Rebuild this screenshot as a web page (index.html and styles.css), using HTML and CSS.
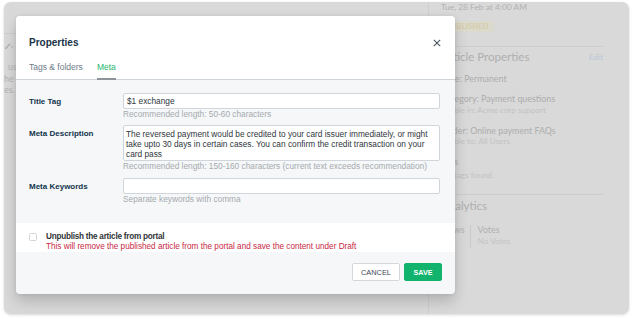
FILE: index.html
```html
<!DOCTYPE html>
<html lang="en">
<head>
<meta charset="utf-8">
<title>Properties</title>
<link rel="stylesheet" href="styles.css">
</head>
<body>
<div class="window">
  <div class="app-main">
    <div class="app-header"></div>
    <div class="app-content">
      <div class="edit-tool">
        <svg width="9" height="6" viewBox="0 0 9 6"><path d="M0.6 5.4 L4.6 1.2" stroke="#b0b0b0" stroke-width="1.4" fill="none" stroke-linecap="round"/><path d="M6 3.6 L8.4 3.6 L7.2 5 Z" fill="#b0b0b0"/></svg>
      </div>
      <p class="bg-text"><span class="line ind">us</span><span class="line">he</span><span class="line">es.</span></p>
    </div>
  </div>
  <aside class="side">
    <div class="side-date">Tue, 28 Feb at 4:00 AM</div>
    <div class="badge">PUBLISHED</div>
    <div class="rule"></div>
    <div class="side-head"><h3>Article Properties</h3><span class="edit">Edit</span></div>
    <div class="prop p-type">Type: Permanent</div>
    <div class="prop p-gap">Category: Payment questions</div>
    <div class="sub">Visible in: Acme corp support</div>
    <div class="prop p-gap">Folder: Online payment FAQs</div>
    <div class="sub">Visible to: All Users</div>
    <div class="prop p-gap">Tags</div>
    <div class="sub sub-tags">No tags found.</div>
    <div class="rule rule-2"></div>
    <h3 class="analytics">Analytics</h3>
    <div class="stats">
      <div class="stat"><div class="stat-label">Views</div></div>
      <div class="stat"><div class="stat-label">Votes</div><div class="stat-value">No Votes</div></div>
    </div>
  </aside>

  <div class="modal" role="dialog" aria-label="Properties">
    <header class="modal-head">
      <div class="title-row">
        <h2>Properties</h2>
        <button class="close" aria-label="Close"><svg width="8" height="8" viewBox="0 0 8 8"><path d="M0.8 0.8 L7.2 7.2 M7.2 0.8 L0.8 7.2" stroke="#4a5863" stroke-width="1.1" fill="none"/></svg></button>
      </div>
      <nav class="tabs">
        <span class="tab">Tags &amp; folders</span>
        <span class="tab active">Meta</span>
      </nav>
    </header>
    <section class="modal-body">
      <div class="field">
        <label class="label">Title Tag</label>
        <div class="control">
          <input class="input" type="text" value="$1 exchange">
          <p class="hint">Recommended length: 50-60 characters</p>
        </div>
      </div>
      <div class="field">
        <label class="label">Meta Description</label>
        <div class="control">
          <textarea class="input textarea">The reversed payment would be credited to your card issuer immediately, or might take upto 30 days in certain cases. You can confirm the credit transaction on your card pass</textarea>
          <p class="hint">Recommended length: 150-160 characters (current text exceeds recommendation)</p>
        </div>
      </div>
      <div class="field">
        <label class="label">Meta Keywords</label>
        <div class="control">
          <input class="input" type="text" value="">
          <p class="hint">Separate keywords with comma</p>
        </div>
      </div>
    </section>
    <section class="unpublish">
      <span class="checkbox"></span>
      <div class="unp-text">
        <div class="unp-title">Unpublish the article from portal</div>
        <div class="unp-warn">This will remove the published article from the portal and save the content under Draft</div>
      </div>
    </section>
    <footer class="modal-foot">
      <button class="btn">CANCEL</button>
      <button class="btn primary">SAVE</button>
    </footer>
  </div>
</div>
</body>
</html>
```

FILE: styles.css
```css
html, body {
  margin: 0;
  padding: 0;
}
body {
  width: 633px;
  height: 319px;
  overflow: hidden;
  background: #ffffff;
  font-family: "Liberation Sans", Arial, sans-serif;
}

.window {
  position: relative;
  margin: 2px 0 0 4px;
  width: 625px;
  height: 312px;
  border-radius: 7px;
  background: #d9d9d9;
  display: flex;
  overflow: hidden;
  box-shadow: 0 1px 3px rgba(0, 0, 0, 0.16);
}

/* dimmed background app */
.app-main {
  width: 424px;
  flex: none;
}
.app-header {
  height: 31px;
  border-bottom: 1px solid #cecece;
}
.app-content {
  padding: 8.7px 0 0 1px;
}
.edit-tool {
  height: 6px;
  line-height: 0;
}
.bg-text {
  margin: 12.5px 0 0 -1px;
  font-family: Lato, sans-serif;
  font-size: 9px;
  line-height: 11.5px;
  color: #b3b3b3;
}
.bg-text .line {
  display: block;
  white-space: nowrap;
}
.bg-text .ind {
  padding-left: 4px;
}

.side {
  flex: 1;
  border-left: 1px solid #cfcfcf;
  padding: 0 26px 0 12px;
  display: flex;
  flex-direction: column;
  font-family: Lato, sans-serif;
}
.side-date {
  font-size: 8.4px;
  line-height: 10px;
  color: #b2b2b2;
}
.badge {
  align-self: flex-start;
  margin-top: 8.7px;
  height: 11.6px;
  line-height: 11.6px;
  padding: 0 5px;
  font-size: 7.4px;
  letter-spacing: 0.3px;
  color: #d2c89b;
  background: #dcd9cd;
  border-radius: 2px;
}
.rule {
  height: 1px;
  background: #cdcdcd;
  margin-top: 13.4px;
}
.rule-2 {
  margin-top: 13.1px;
}
.side-head {
  margin-top: 2px;
  height: 16px;
  display: flex;
  justify-content: space-between;
  align-items: center;
}
.side h3 {
  margin: 0;
  font-size: 11.5px;
  font-weight: 400;
  line-height: 16px;
  color: #afafaf;
}
.edit {
  font-size: 8.4px;
  color: #b9c7d4;
}
.prop {
  font-size: 8.9px;
  line-height: 11px;
  color: #adadad;
}
.p-type {
  margin-top: 8.1px;
}
.p-gap {
  margin-top: 9px;
}
.sub {
  margin-top: 0.8px;
  font-size: 8.2px;
  line-height: 11px;
  color: #c2c2c2;
}
.sub-tags {
  margin-top: 2.4px;
}
.side h3.analytics {
  margin-top: 2.7px;
}
.stats {
  margin-top: 11px;
  display: flex;
}
.stat {
  padding: 0 5px 2px 0;
}
.stat + .stat {
  border-left: 1px solid #c9c9c9;
  padding-left: 7px;
}
.stat-label {
  font-size: 8.9px;
  line-height: 10px;
  color: #b0b0b0;
}
.stat-value {
  margin-top: 1px;
  font-size: 8.2px;
  line-height: 10px;
  color: #c4c4c4;
}

/* modal dialog on top */
.modal {
  position: absolute;
  left: 12px;
  top: 14px;
  width: 439px;
  border-radius: 4px;
  overflow: hidden;
  background: #f5f7f8;
  box-shadow: 0 8px 14px rgba(0, 0, 0, 0.17), 0 0 4px rgba(0, 0, 0, 0.08);
}
.modal-head {
  background: #ffffff;
  padding: 20px 14px 0 13px;
  border-bottom: 1px solid #cdd3d8;
}
.title-row {
  display: flex;
  justify-content: space-between;
  align-items: center;
  height: 14px;
}
.title-row h2 {
  margin: 0;
  font-size: 10px;
  line-height: 14px;
  font-weight: 700;
  color: #183247;
}
.close {
  border: 0;
  background: transparent;
  padding: 0;
  width: 8px;
  height: 8px;
  line-height: 0;
  margin-top: -1px;
}
.tabs {
  display: flex;
  gap: 14px;
  margin-top: 11px;
  margin-bottom: -1px;
}
.tab {
  font-size: 8.5px;
  line-height: 12px;
  color: #6f7c87;
  padding-bottom: 5px;
  border-bottom: 2px solid transparent;
}
.tab.active {
  color: #27b56e;
  border-bottom-color: #8e9499;
}

.modal-body {
  padding: 12.7px 15px 19.5px 13px;
  display: flex;
  flex-direction: column;
  gap: 6.6px;
}
.field {
  display: grid;
  grid-template-columns: 94px 1fr;
}
.label {
  padding-top: 3px;
  font-size: 8px;
  line-height: 11px;
  font-weight: 700;
  color: #12344d;
}
.control {
  min-width: 0;
}
.input {
  display: block;
  box-sizing: border-box;
  width: 100%;
  height: 16px;
  margin: 0;
  padding: 0 3px;
  border: 1px solid #cfd5da;
  border-radius: 2px;
  background: #ffffff;
  font-family: "Liberation Sans", Arial, sans-serif;
  font-size: 8.3px;
  color: #2f363c;
  outline: none;
}
.textarea {
  height: 35.7px;
  padding: 3px 2px;
  line-height: 10px;
  resize: none;
  overflow: hidden;
}
.hint {
  margin: 0;
  font-size: 8.3px;
  line-height: 10px;
  color: #a5abb0;
}

.unpublish {
  background: #ffffff;
  height: 29px;
  box-sizing: border-box;
  padding: 9px 13px 0;
  display: flex;
  gap: 9px;
}
.checkbox {
  flex: none;
  box-sizing: border-box;
  width: 8px;
  height: 8px;
  margin-top: 1.3px;
  border: 1px solid #d3d7da;
  border-radius: 1.5px;
  background: #ffffff;
}
.unp-title {
  font-size: 8.2px;
  line-height: 10px;
  font-weight: 700;
  letter-spacing: -0.25px;
  color: #2f3437;
}
.unp-warn {
  font-size: 8.2px;
  line-height: 10px;
  color: #c91f43;
  white-space: nowrap;
}

.modal-foot {
  height: 42.3px;
  box-sizing: border-box;
  padding: 11px 13px 0;
  display: flex;
  justify-content: flex-end;
  gap: 4px;
}
.btn {
  box-sizing: border-box;
  height: 18.3px;
  padding: 0 8px;
  border: 1px solid #d3d8dc;
  border-radius: 2px;
  background: #ffffff;
  font-family: "Liberation Sans", Arial, sans-serif;
  font-size: 7.4px;
  color: #3f4a53;
  cursor: pointer;
}
.btn.primary {
  background: #12b46d;
  border-color: #12b46d;
  color: #ffffff;
  font-weight: 700;
  font-size: 7.2px;
  padding: 0 8.5px;
}
```
